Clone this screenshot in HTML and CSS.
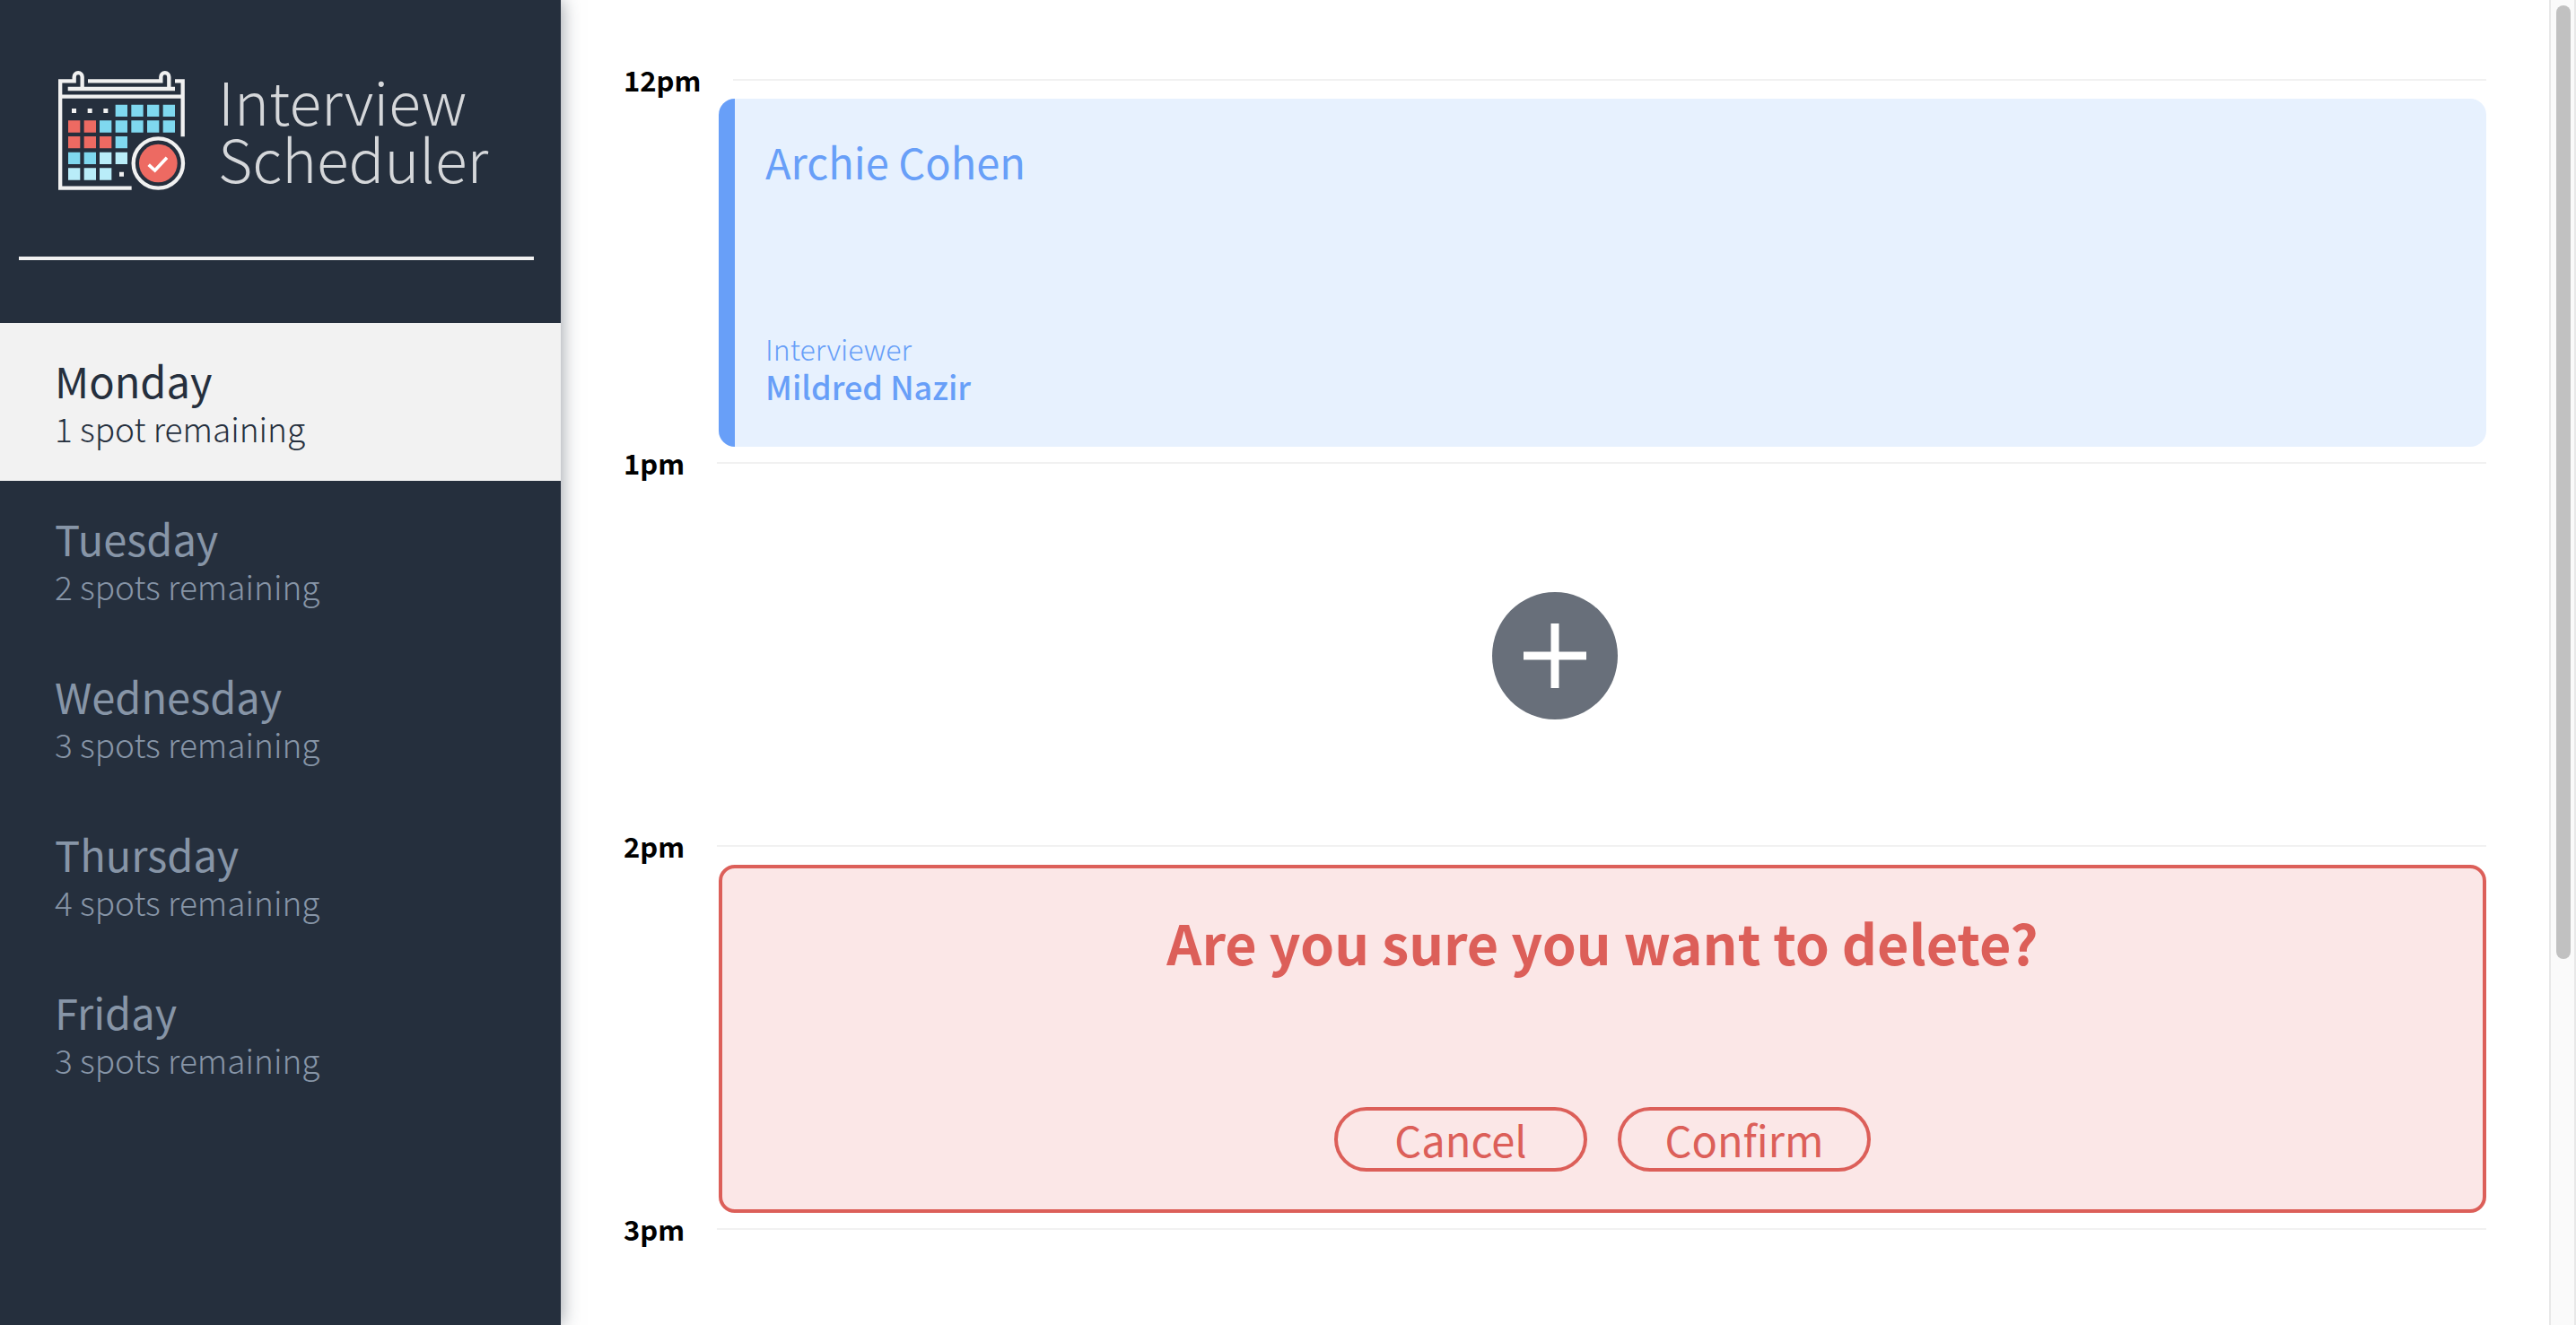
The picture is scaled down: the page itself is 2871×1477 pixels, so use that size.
FILE: index.html
```html
<!DOCTYPE html>
<html lang="en">
<head>
  <meta charset="utf-8">
  <title>Interview Scheduler</title>
  <link rel="stylesheet" href="styles.css">
</head>
<body>
  <div class="layout">
    <aside class="sidebar">
      <div class="logo">
        <svg class="logo-icon" viewBox="75 56 426 402" aria-hidden="true">
          <g fill="none" stroke="#f1f1f1" stroke-width="13">
            <path d="M155 115V76a13.500 13.500 0 0 0-27 0V90H81.500V448H320"/>
            <path d="M174 90H418V76a13.500 13.500 0 0 1 27 0V115"/>
            <path d="M465 90H491V276"/>
            <path d="M107 116H465M81 142H491"/>
            <circle cx="409" cy="365" r="83"/>
          </g>
          <g fill="#f1f1f1">
            <path d="M120 182h15v15h-15zM173 182h15v15h-15zM226 182h15v15h-15zM279 394h15v15h-15z"/>
          </g>
          <g fill="#7fd8ef">
            <path d="M266 169h40v40h-40zM319 169h40v40h-40zM372 169h40v40h-40zM425 169h40v40h-40z"/>
            <path d="M213 222h40v40h-40zM266 222h40v40h-40zM319 222h40v40h-40zM372 222h40v40h-40zM425 222h40v40h-40z"/>
            <path d="M266 275h40v40h-40zM108 328h40v40h-40zM161 328h40v40h-40z"/>
          </g>
          <g fill="#b9edf9">
            <path d="M213 328h40v40h-40zM266 328h40v40h-40zM108 381h40v40h-40zM161 381h40v40h-40zM213 381h40v40h-40z"/>
          </g>
          <g fill="#ed6a62">
            <path d="M108 222h40v40h-40zM161 222h40v40h-40zM108 275h40v40h-40zM161 275h40v40h-40zM213 275h40v40h-40z"/>
            <circle cx="409" cy="365" r="64"/>
          </g>
          <path d="M377 370l21 19 40-43" fill="none" stroke="#fff" stroke-width="11"/>
        </svg>
        <div class="logo-text">Interview<br>Scheduler</div>
      </div>
      <hr class="separator">
      <nav class="days">
        <a class="day day-selected" href="#monday" aria-current="true">
          <span class="day-name">Monday</span>
          <span class="day-spots">1 spot remaining</span>
        </a>
        <a class="day" href="#tuesday">
          <span class="day-name">Tuesday</span>
          <span class="day-spots">2 spots remaining</span>
        </a>
        <a class="day" href="#wednesday">
          <span class="day-name">Wednesday</span>
          <span class="day-spots">3 spots remaining</span>
        </a>
        <a class="day" href="#thursday">
          <span class="day-name">Thursday</span>
          <span class="day-spots">4 spots remaining</span>
        </a>
        <a class="day" href="#friday">
          <span class="day-name">Friday</span>
          <span class="day-spots">3 spots remaining</span>
        </a>
      </nav>
    </aside>

    <main class="schedule">
      <section class="slot">
        <header class="slot-header"><h4 class="slot-time">12pm</h4></header>
        <article class="card card-booked">
          <h2 class="student">Archie Cohen</h2>
          <div>
            <h4 class="role">Interviewer</h4>
            <h3 class="interviewer">Mildred Nazir</h3>
          </div>
        </article>
      </section>

      <section class="slot">
        <header class="slot-header"><h4 class="slot-time">1pm</h4></header>
        <div class="card-empty">
          <button class="add" type="button" aria-label="Add appointment">
            <svg class="add-icon" viewBox="0 0 140 142" aria-hidden="true">
              <ellipse cx="70" cy="71" rx="70" ry="71" fill="#686f7a"/>
              <path d="M35 71H105M70 35V107" stroke="#fff" stroke-width="9"/>
            </svg>
          </button>
        </div>
      </section>

      <section class="slot">
        <header class="slot-header"><h4 class="slot-time">2pm</h4></header>
        <article class="card card-confirm">
          <h1 class="question">Are you sure you want to delete?</h1>
          <div class="actions">
            <button class="button" type="button">Cancel</button>
            <button class="button" type="button">Confirm</button>
          </div>
        </article>
      </section>

      <section class="slot">
        <header class="slot-header"><h4 class="slot-time">3pm</h4></header>
      </section>
    </main>

    <div class="scroll-track" aria-hidden="true"><div class="scroll-thumb"></div></div>
  </div>
</body>
</html>
```
FILE: styles.css
```css
* {
  box-sizing: border-box;
}

body,
h1,
h2,
h3,
h4 {
  margin: 0;
}

body {
  font-family: "Noto Sans CJK JP", "Noto Sans", sans-serif;
  background: #fff;
  color: #000;
}

.layout {
  display: flex;
  height: 100vh;
  overflow: hidden;
}

/* Sidebar */

.sidebar {
  position: relative;
  flex: 0 0 625px;
  padding-top: 79px;
  background: #252f3d;
  box-shadow: 0 0 20px rgba(37, 47, 61, 0.5);
}

.logo {
  display: flex;
  gap: 36px;
  height: 134px;
  padding-left: 65px;
}

.logo-icon {
  width: 142px;
  height: 134px;
}

.logo-text {
  color: #d5d7da;
  font-size: 66px;
  font-weight: 300;
  line-height: 64px;
}

.separator {
  height: 4px;
  margin: 73px 30px 70px 21px;
  border: 0;
  background: #f1f1f1;
}

.day {
  display: flex;
  flex-direction: column;
  padding: 36px 61px 34px;
  color: #8795a7;
  text-decoration: none;
}

.day-selected {
  background: #f2f2f2;
  color: #252f3d;
}

.day-name {
  font-size: 47px;
  line-height: 56px;
}

.day-spots {
  font-size: 37px;
  font-weight: 300;
  line-height: 50px;
}

/* Schedule */

.schedule {
  flex: 1;
  padding: 71px 70px 0;
  overflow: hidden;
}

.slot-header {
  display: flex;
  align-items: center;
  gap: 36px;
  margin-bottom: 3px;
}

.slot-header::after {
  content: "";
  flex: 1;
  height: 2px;
  background: #f1f1f1;
}

.slot-time {
  font-size: 31px;
  font-weight: 700;
  line-height: 36px;
}

.card {
  display: flex;
  flex-direction: column;
  justify-content: space-between;
  height: 388px;
  margin-left: 106px;
  border-radius: 18px;
}

.card-booked {
  padding: 46px 34px 47px;
  border-left: 18px solid #689ff8;
  background: #e7f1fe;
  color: #689ff8;
}

.student {
  font-size: 47px;
  font-weight: 400;
  line-height: 48px;
}

.role {
  font-size: 32px;
  font-weight: 300;
  line-height: 42px;
}

.interviewer {
  font-size: 36px;
  font-weight: 500;
  line-height: 42px;
}

.card-empty {
  display: flex;
  align-items: center;
  justify-content: center;
  height: 388px;
}

.add {
  padding: 0;
  border: 0;
  background: none;
}

.add-icon {
  display: block;
  width: 140px;
  height: 142px;
}

.card-confirm {
  align-items: center;
  padding: 50px 34px 42px;
  border: 4px solid #dc5f59;
  background: #fbe7e7;
  color: #dc5f59;
}

.question {
  font-size: 61px;
  font-weight: 700;
  line-height: 64px;
}

.actions {
  display: flex;
  gap: 34px;
}

.button {
  width: 282px;
  height: 72px;
  padding: 0;
  border: 4px solid #dc5f59;
  border-radius: 36px;
  background: none;
  color: #dc5f59;
  font-family: inherit;
  font-size: 47px;
  line-height: 64px;
}

/* Scroll indicator */

.scroll-track {
  flex: 0 0 30px;
  padding: 6px 4px 0 6px;
  border: solid #e8e8e8;
  border-width: 0 2px;
  background: #fafafa;
}

.scroll-thumb {
  width: 16px;
  height: 72vh;
  border-radius: 8px;
  background: #c1c1c1;
}
```
